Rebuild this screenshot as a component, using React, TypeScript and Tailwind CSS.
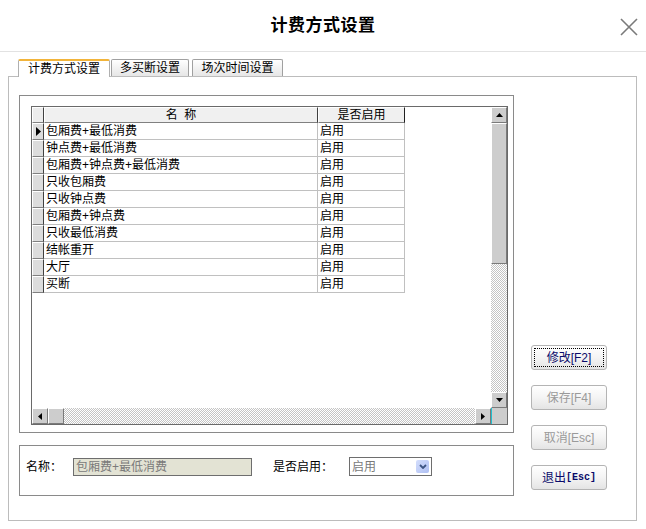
import React from 'react';

const rows = [
  '包厢费+最低消费',
  '钟点费+最低消费',
  '包厢费+钟点费+最低消费',
  '只收包厢费',
  '只收钟点费',
  '包厢费+钟点费',
  '只收最低消费',
  '结帐重开',
  '大厅',
  '买断',
];

const raised =
  'border border-t-white border-l-white border-r-[#7a7a7a] border-b-[#7a7a7a] bg-[#cdcdcd]';
const hatch =
  'bg-[image:repeating-conic-gradient(#c4c4c4_0_25%,#ffffff_0_50%)] bg-[length:2px_2px]';

const Arrow: React.FC<{ dir: 'up' | 'down' | 'left' | 'right' }> = ({ dir }) => {
  const pts = {
    up: '0,4 7,4 3.5,0',
    down: '0,0 7,0 3.5,4',
    left: '4,0 4,7 0,3.5',
    right: '0,0 0,7 4,3.5',
  }[dir];
  const vertical = dir === 'up' || dir === 'down';
  return (
    <svg width={vertical ? 7 : 4} height={vertical ? 4 : 7}>
      <polygon points={pts} fill="#000" />
    </svg>
  );
};

const Tab: React.FC<{ label: string; active?: boolean; w: string }> = ({ label, active, w }) =>
  active ? (
    <div
      className={`${w} relative z-10 h-[18px] -mb-px flex items-center justify-center rounded-t-[2px] border border-b-0 border-[#b0b0b0] border-t-2 border-t-[#f2b43a] bg-white text-[12px] leading-none`}
    >
      {label}
    </div>
  ) : (
    <div
      className={`${w} h-[17px] flex items-center justify-center rounded-t-[2px] border border-b-0 border-[#a0a0a0] bg-linear-to-b from-white to-[#e6e6e6] text-[12px] leading-none`}
    >
      {label}
    </div>
  );

const Btn: React.FC<{ children: React.ReactNode; disabled?: boolean; focus?: boolean }> = ({
  children,
  disabled,
  focus,
}) => (
  <div
    className={`relative w-[76px] h-[25px] flex items-center justify-center rounded-[3px] border border-[#b4b4b4] bg-linear-to-b from-white via-[#f4f4f4] to-[#e4e4e4] text-[12px] leading-none ${
      disabled ? 'text-[#9a9a9a]' : 'text-[#0a0a6a]'
    }`}
  >
    {focus && <div className="absolute inset-[2px] border border-dotted border-black" />}
    {children}
  </div>
);

export default function App() {
  return (
    <div className="w-[646px] h-[529px] bg-white flex flex-col text-black font-['Liberation_Sans','Noto_Sans_CJK_SC',sans-serif] overflow-hidden">
      {/* title */}
      <div className="relative h-[52px] shrink-0 flex items-center justify-center border-b border-[#e2e2e2]">
        <span className="text-[17px] font-bold tracking-[0.5px] pt-[1px]">计费方式设置</span>
        <svg className="absolute right-[8px] top-[18px]" width="18" height="18" viewBox="0 0 18 18">
          <path d="M1 1L17 17M17 1L1 17" stroke="#7a7a7a" strokeWidth="1.6" fill="none" />
        </svg>
      </div>

      {/* tabs */}
      <div className="mt-[6px] pl-[18px] flex items-end gap-[1px] h-[18px] shrink-0">
        <Tab label="计费方式设置" active w="w-[92px]" />
        <Tab label="多买断设置" w="w-[78px]" />
        <div className="w-[1px]" />
        <Tab label="场次时间设置" w="w-[91px]" />
      </div>

      {/* panel */}
      <div className="ml-[8px] w-[629px] h-[445px] shrink-0 border border-[#bcbcbc] flex pl-[10px] pt-[18px]">
        <div className="w-[495px] flex flex-col">
          {/* grid group */}
          <div className="h-[338px] border border-[#8a8a8a] pl-[11px] pt-[10px]">
            <div className="w-[477px] h-[319px] border border-[#6a6a6a] flex flex-col">
              <div className="flex h-[301px]">
                <div className="flex-1 bg-white text-[12px] leading-none">
                  {/* header */}
                  <div className="flex h-[16px]">
                    <div className="w-[12px] border border-t-white border-l-white border-r-[#404040] border-b-[#808080] bg-[#ececec]" />
                    <div className="w-[274px] flex items-center justify-center border border-t-white border-l-white border-r-[#404040] border-b-[#808080] bg-[#f0f0f0]">
                      名&nbsp;&nbsp;称
                    </div>
                    <div className="w-[87px] flex items-center justify-center border border-t-white border-l-white border-r-[#202020] border-b-[#808080] bg-[#f0f0f0]">
                      是否启用
                    </div>
                  </div>
                  {rows.map((r, i) => (
                    <div key={r} className="flex h-[17px]">
                      <div className="w-[12px] flex items-center justify-center border border-t-white border-l-white border-r-[#404040] border-b-[#808080] bg-[#dcdcdc]">
                        {i === 0 && (
                          <svg width="5" height="9">
                            <polygon points="0,0 5,4.5 0,9" fill="#000" />
                          </svg>
                        )}
                      </div>
                      <div className="w-[274px] flex items-center pl-[2px] border-r border-b border-[#c0c0c0]">
                        {r}
                      </div>
                      <div className="w-[87px] flex items-center pl-[2px] border-r border-b border-[#c0c0c0]">
                        启用
                      </div>
                    </div>
                  ))}
                </div>
                {/* vertical scrollbar */}
                <div className="w-[16px] flex flex-col">
                  <div className={`h-[16px] flex items-center justify-center ${raised}`}>
                    <Arrow dir="up" />
                  </div>
                  <div className={`h-[141px] ${raised}`} />
                  <div className={`flex-1 ${hatch}`} />
                  <div className={`h-[16px] flex items-center justify-center ${raised}`}>
                    <Arrow dir="down" />
                  </div>
                </div>
              </div>
              {/* horizontal scrollbar */}
              <div className="flex h-[16px]">
                <div className={`w-[16px] flex items-center justify-center ${raised}`}>
                  <Arrow dir="left" />
                </div>
                <div className={`w-[16px] ${raised}`} />
                <div className={`flex-1 ${hatch}`} />
                <div className={`w-[16px] flex items-center justify-center ${raised}`}>
                  <Arrow dir="right" />
                </div>
                <div className="w-[16px] bg-[#cdcdcd] border-l border-l-[#20c0d0]" />
              </div>
            </div>
          </div>

          {/* edit group */}
          <div className="mt-[12px] h-[51px] border border-[#8a8a8a] flex items-start pt-[12px] pl-[6px] text-[12px] leading-none">
            <span className="w-[47px] h-[18px] flex items-center">名称：</span>
            <div className="w-[179px] h-[18px] border border-[#6e6e6e] bg-[#e3e3d4] flex items-center pl-[2px] text-[#7a7a7a]">
              包厢费+最低消费
            </div>
            <span className="ml-[21px] w-[76px] h-[18px] flex items-center">是否启用：</span>
            <div className="w-[83px] h-[19px] -mt-px border border-[#6e6e6e] bg-white flex items-center justify-between pl-[2px] pr-[2px] text-[#7a7a7a]">
              <span>启用</span>
              <div className="w-[13px] h-[13px] rounded-[2px] bg-linear-to-br from-[#d4defc] to-[#aebff2] flex items-center justify-center">
                <svg width="8" height="5" viewBox="0 0 8 5">
                  <path d="M1 1L4 4L7 1" stroke="#3c5482" strokeWidth="1.8" fill="none" />
                </svg>
              </div>
            </div>
          </div>
        </div>

        {/* buttons */}
        <div className="ml-[17px] pt-[250px] flex flex-col gap-[15px]">
          <Btn focus>修改[F2]</Btn>
          <Btn disabled>保存[F4]</Btn>
          <Btn disabled>取消[Esc]</Btn>
          <Btn>
            退出<span className="font-['Liberation_Mono',monospace] font-bold text-[10px]">[Esc]</span>
          </Btn>
        </div>
      </div>

      <div className="mt-[9px] h-px bg-[#9c9c9c] shrink-0" />
    </div>
  );
}
